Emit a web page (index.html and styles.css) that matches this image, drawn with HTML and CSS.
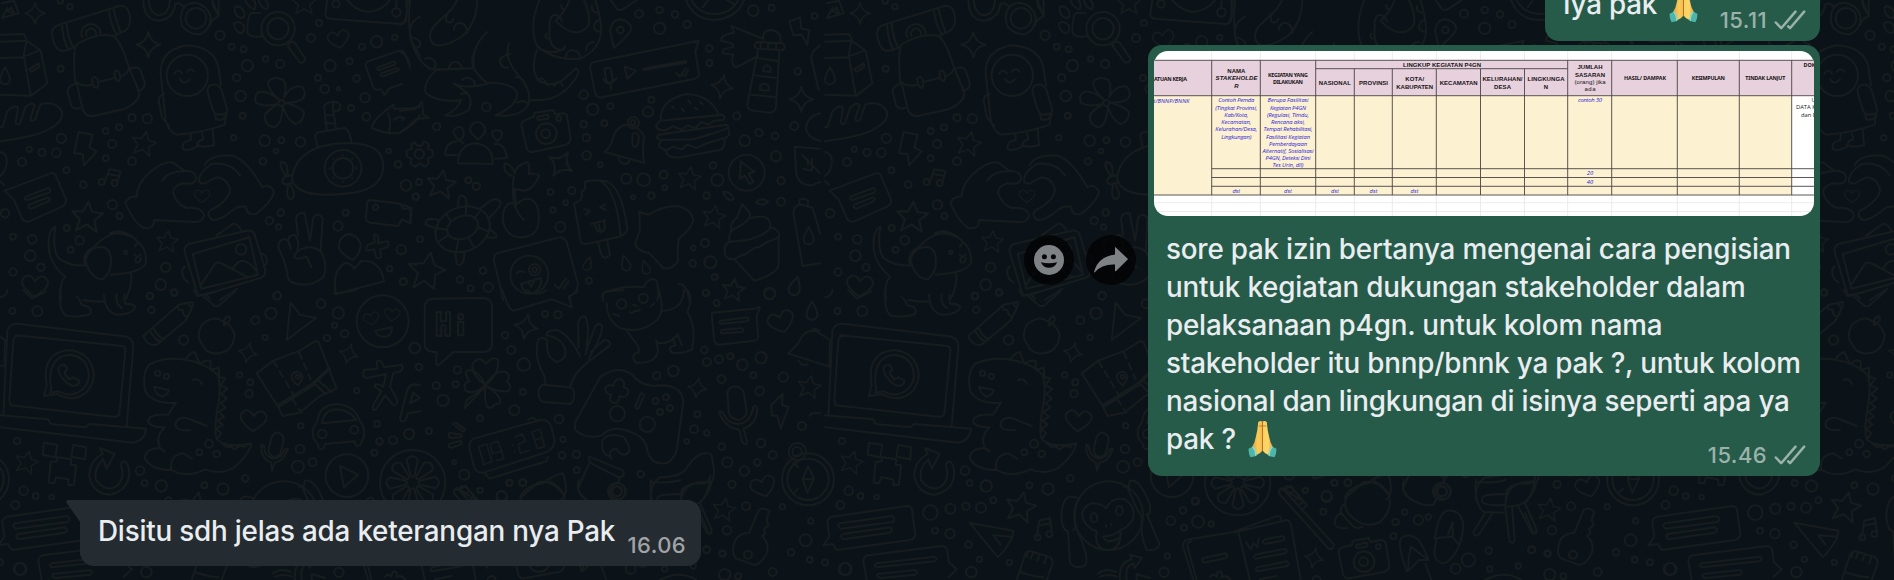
FILE: index.html
```html
<!DOCTYPE html>
<html lang="id">
<head>
<meta charset="utf-8">
<title>Chat</title>
<link rel="stylesheet" href="styles.css">
</head>
<body>
<svg class="wallpaper" width="1894" height="580" viewBox="0 0 1894 580" aria-hidden="true">
  <defs>
    <path id="star" d="M0-42L13-14 43-12 20 9 29 40 0 22-29 40-20 9-43-12-13-14Z"/>
    <path id="spark" d="M0-38Q6-6 36 0 6 6 0 38-6 6-36 0-6-6 0-38Z"/>
    <path id="heart" d="M0 32Q-46 2-38-18-20-44 0-14 20-44 38-18 46 2 0 32Z"/>
    <path id="drop" d="M0-24Q-15 2-15 12A15 15 0 0 0 15 12Q15 2 0-24Z"/>
    <g id="tile">
      <g transform="scale(.33333)">
        <path d="M5 10L42 2 56 40 6 54 22 24M22 34l12-12 8 18Z"/>
        <path d="M178 74L358 18Q384 14 390 50 392 84 372 94L345 106M224 142L190 153Q164 154 156 104 154 80 178 74M186 76Q190 126 206 150M200 70Q204 118 220 142M326 28Q332 76 350 102M340 24Q350 68 362 98M246 112A29 29 0 1 1 302 102M260 108A15 15 0 1 1 288 102"/>
        <path d="M226 252Q218 160 228 135 290 96 340 108 362 120 388 206L418 276Q420 306 370 328L280 348Q250 352 244 310L230 250M230 246Q246 262 274 254M296 246L342 234M360 230Q382 222 386 206M276 236q8-10 16 0 6 20-2 28-12-2-14-28M344 216q8-8 14 2 6 18-2 26-14-4-12-28M232 250Q200 258 203 276L214 318Q224 330 240 324M390 206Q416 196 422 212L434 246Q436 270 414 272"/>
        <path d="M0 104L72 102 80 120 70 172 0 174M0 125L80 122 122 152 142 250 94 287 0 284M72 172L92 285M70 170L118 152M88 208L116 190 118 200 94 216Z"/>
        <use href="#drop" x="15" y="226"/>
        <path d="M0 424Q110 410 150 386 192 362 186 336 170 302 124 312 118 318 106 358 90 370 92 352L104 316Q98 302 76 322L60 370Q42 380 50 350L54 322Q42 314 22 334L8 380 0 382"/>
        <use href="#spark" transform="translate(105 40) scale(.85)"/><use href="#spark" x="445" y="134"/>
        <path d="M430 0Q430 60 478 62 520 56 526 12 540 4 552 22M446 0Q450 44 478 46 508 42 510 0M636 0L656 48Q632 60 630 76M656 0V48M640 0Q630 12 656 44M552 22Q534 50 548 80 570 106 602 102 632 88 632 50 620 12 582 8 560 10 552 22"/><circle cx="588" cy="55" r="31"/>
        <path d="M497 360Q506 396 530 404 610 398 674 374 676 354 680 340M497 360L482 220Q480 150 560 136 640 140 655 200L663 256M494 282Q476 284 476 304L486 352 508 378M622 272Q624 252 648 254 664 260 668 282L682 330Q680 348 646 342 636 330 622 272M646 344L648 358Q672 364 678 344M572 404V420Q544 424 548 446 560 456 592 440 590 424 610 418L606 400M592 432Q600 446 642 436L638 388M522 222q12-18 24-2M560 216q12-16 24 0M540 236q12 22 30 2"/><circle cx="562" cy="226" r="62"/>
        <circle cx="834" cy="86" r="50"/><circle cx="834" cy="86" r="32"/><path d="M782 40L756 38Q742 44 742 96 748 116 788 108M862 136Q870 120 884 128L916 176Q914 192 898 186Z"/>
        <path d="M736 0Q744 24 764 28 770 10 760 0M776 0Q780 22 800 28 810 14 796 0M704 22q12-8 24 6 12 22-2 26-24-4-22-32M702 70q14-10 30 6 4 20-10 24-20-6-20-30"/>
        <path d="M982 0L976 42Q978 56 990 56L1202 72Q1218 72 1220 50L1224 0M1042 0Q1070 34 1106 36 1150 30 1170 0M1190 0L1188 26"/><circle cx="1008" cy="12" r="11"/><circle cx="1189" cy="37" r="13"/>
        <use href="#star" transform="translate(912 8) scale(.82)"/><use href="#heart" transform="translate(1016 118) rotate(-12) scale(.82)"/>
        <path d="M1226 190L1212 156Q1206 150 1192 154L1104 184Q1094 188 1098 200L1120 262Q1126 272 1144 268L1152 286 1170 264 1206 252M1134 202l48-18q10 4 2 10l-46 16q-10-2-4-8M1144 220l46-16q10 2 4 8l-46 18q-10-4-4-10"/>
        <path d="M852 292Q862 256 850 240 824 226 804 246 804 270 836 298 802 270 776 276 760 290 768 308 790 322 834 312 812 324 796 342 790 374 820 382 846 376 848 320 862 360 886 372 912 366 912 336 900 320 856 308 880 310 904 300 924 284 906 260 874 252 852 292"/><circle cx="844" cy="309" r="9"/>
        <path d="M876 530Q896 434 1030 430 1150 424 1150 500 1146 566 1060 578 880 602 876 530M954 444L946 410Q944 398 960 396L1034 384Q1050 390 1054 428M980 390L972 320Q980 302 1012 306 1028 318 1016 332H1000L1008 386M974 346H1002M976 370H1006M1000 308L998 330M874 526Q842 530 848 548 856 560 880 544M858 528Q832 492 846 486 866 488 862 526M864 556Q856 594 872 598 892 588 872 556"/><circle cx="1029" cy="505" r="55"/><circle cx="1029" cy="505" r="31"/><circle class="dots" cx="1029" cy="505" r="40"/>
        <path d="M1260 50Q1220 70 1232 120L1260 168M1260 320L1240 324 1182 326 1180 314Q1116 360 1116 384 1156 404 1200 398 1250 370 1260 344M1164 340Q1176 364 1166 400M1182 360q14-16 32-4"/>
        <path d="M1108 600L1192 610Q1206 612 1208 626L1232 626 1230 668 1206 658 1194 678 1110 668Q1096 664 1098 650L1102 606Z"/><circle cx="1127" cy="622" r="8"/>
        <path d="M236 396L278 404 268 442 290 454 252 496 248 462 222 460Z"/><use href="#star" transform="translate(432 430) rotate(12) scale(.85)"/><use href="#star" transform="translate(262 650) rotate(4) scale(1.08)"/><use href="#star" transform="translate(502 724) rotate(5) scale(.76)"/>
        <path d="M314 546L328 508 362 514 352 548M324 522L358 528"/><circle cx="305" cy="546" r="9"/><circle cx="344" cy="549" r="9"/>
        <path d="M14 572L152 520Q164 516 168 528L198 598Q200 612 186 620L88 664Q74 668 66 656L42 600ZM78 590l66-26q10 4 4 14l-66 22q-12-2-4-10M88 614l56-22q10 4 2 12l-52 22q-12-2-6-12M0 456Q24 460 20 492 14 520 0 528M0 544l12 10"/>
        <path d="M410 590Q410 554 444 522 490 480 520 488L552 512Q590 512 588 538 582 556 546 550 516 560 520 580 530 612 560 624 606 620 612 646 608 668 580 666L462 660Q462 690 430 684 404 670 376 610 384 588 410 590M486 542Q504 514 552 514M598 546Q590 524 634 492 690 484 720 526M614 496Q626 466 690 466 724 470 762 522L788 562Q806 548 822 574 820 600 768 642 740 648 738 620 710 616 694 634 660 662 636 660 618 644 630 632 690 600 690 566 680 534 650 532 628 540 616 550 604 552 598 546"/><use href="#heart" transform="translate(606 588) scale(.6)"/>
        <path d="M184 900Q176 850 196 830 140 786 146 720 148 690 166 680 156 750 176 774 210 800 256 796M392 820Q400 846 378 896M256 796Q244 760 280 742 314 706 350 700 400 704 414 726 440 746 438 790 420 820 332 824M256 780Q270 836 308 838 338 816 332 770 326 736 294 742 270 744 258 776M330 700Q364 682 404 716M414 728l-10 12M404 764q8 12 18 0M414 770q-14 8-4 18 12 0 12-14"/><circle cx="377" cy="757" r="5"/>
        <use href="#heart" transform="translate(104 858) rotate(5)"/>
        <path d="M566 732L740 692Q758 688 764 704L796 810Q798 828 780 834L608 886Q594 890 590 874L554 756Q552 738 566 732M578 762L748 712 774 824 604 866ZM602 856L646 790Q656 784 668 792L740 830M700 804Q722 766 754 796L768 812M650 706L698 672Q712 668 724 692M554 800Q540 810 552 836L566 848M786 760Q804 768 800 790L790 800M630 896L620 886M660 900L712 866"/><circle cx="723" cy="748" r="16"/>
        <path d="M862 816Q850 770 836 746 832 716 858 718 870 724 872 748M870 740Q856 706 884 704 900 724 892 750M894 706L888 656Q892 636 914 640L930 722 940 652Q954 636 968 654L962 754M892 754Q930 730 962 754 986 790 970 832 926 868 874 846 860 836 862 816M892 754Q872 776 896 776L920 770 934 802"/>
        <path d="M1058 780Q1018 760 1016 736 1020 704 1050 702 1082 712 1082 740 1078 766 1058 780M1036 788Q1058 792 1062 806 1074 796 1082 784 1140 776 1152 844L1008 882Q994 814 1036 788M1122 704q12-4 14 12l-2 14 28-6q10 10-2 18l-20 6 4 22q-8 10-16 0l-6-22-20 4q-8-10 4-18l18-6ZM1228 794Q1226 786 1250 796"/>
      </g>
      <g transform="translate(400 0) scale(.33333)">
        <path d="M30 0Q14 160 90 206 140 210 222 204M232 0Q230 70 188 108 130 146 100 132 80 110 100 80L156 26 172 0M222 204Q212 140 262 96M262 250Q200 200 222 160M108 210Q66 250 78 280 120 310 184 300 172 330 136 346 170 354 206 330 224 290 188 268L160 250Q200 270 274 248 340 250 352 280 352 318 286 346 360 354 384 316 400 270 350 220 310 170 328 128M108 210Q170 206 222 204M330 162q-34 8-30 28 14 18 24 12M38 112q28 10 22 26-8 8-18 4M74 176q20-8 32 12 2 14-4 18M146 206q4-20 18-20 20 0 22 20M150 30q-18 24-10 36 18 6 20-10M162 90q0-20 18-22 22 4 22 32M186 240q20-16 38 6 2 14-8 14M184 282q22-8 26 14M348 232q18-6 30 28M352 308q16-10 28 0M18 0Q26 70 0 74M0 154Q30 170 30 204"/>
        <path d="M418 0Q386 80 410 136 460 184 540 176 600 150 604 90 600 40 586 0M410 150Q390 210 416 242 460 268 500 230L526 206Q542 206 530 230 480 310 392 300M450 76Q440 140 480 150 496 150 494 138 490 158 450 156 420 150 412 140M466 64Q500 30 508 0M552 0Q582 70 556 86 520 116 468 64M448 74q2-30 18-30 16 4 20 20M496 176q2-24 20-26 22 2 26 24M558 152q0-26 24-26M602 96q-22-4-20-18 4-18 16-16M590 38q-18-6-14-20M414 240q16-14 28 16M462 258q16-24 26-2M494 30q-12-4-10-16M440 100q-10 8 2 16"/>
        <path d="M632 0L650 26Q660 34 672 26L710 0M642 144L630 92Q636 58 660 58 692 64 694 86 692 100 642 144"/><circle cx="661" cy="90" r="10"/>
        <path d="M582 186L896 122 886 156 896 214Q900 230 886 236L606 292Q592 294 586 282L570 202Q570 190 582 186M614 206q14-8 20 6l4 28q-6 14-16 6-8-14-8-40M610 238q14 26 40-4M630 250l4 18M674 200L708 212 682 236ZM730 206l128-24q2 4 0 6l-126 22ZM828 218l12 12 18-26M846 224l10 4 8-20"/>
        <path d="M858 0Q880 60 946 60 1010 54 1032 0M874 0Q898 44 950 42 1000 36 1014 0M924 0L908 22M980 0L1004 14"/>
        <path d="M1084 114L994 78 1002 98Q960 104 964 122L980 126Q1006 132 998 142 960 146 970 160L1000 164 996 182Q998 204 1014 200L1074 168M1090 120Q1084 92 1112 90 1144 92 1142 126M1072 126L1148 130Q1160 142 1148 150L1070 146Q1056 136 1072 126M1082 126V146M1104 128V148M1128 130V150M1074 150L1042 312Q1040 330 1060 332L1110 338Q1128 336 1128 318L1138 152M1074 174L1136 184M1064 226L1132 234M1054 284L1128 292M1090 214V202Q1104 188 1112 204V216ZM1080 270V258Q1094 244 1106 258V272Z"/>
        <path d="M1168 64L1200 52 1204 86 1228 90 1222 134 1204 104 1180 106Z"/><use href="#spark" transform="translate(966 260) rotate(10) scale(.95)"/><use href="#spark" transform="translate(1204 298)"/><use href="#spark" transform="translate(482 492) rotate(32) scale(1.1)"/>
        <path d="M1260 136Q1230 160 1234 176L1256 270M1260 340Q1220 350 1218 386 1222 414 1260 422M1260 446L1184 440 1188 510Q1190 558 1236 556L1260 546M1206 464L1260 520M1222 476l2 20M1236 476v36l-26-6"/>
        <path d="M782 362Q778 300 860 282 930 284 958 346ZM782 362L966 344Q980 350 970 360L940 362 926 374 904 366 886 384 862 376 844 390 820 378 794 392Q768 390 768 376L782 362M776 404L980 374Q990 380 980 386L940 400 880 418 782 420Q764 414 776 404M984 386Q994 404 980 412L920 430 890 444 862 434 846 448 818 440 798 452 776 440 782 420M796 450Q800 476 840 472L960 450Q976 442 974 418M816 318l6 8M846 326l6 8M866 302l6 8M884 324l8 4M900 308l8 4"/>
        <path d="M614 456Q634 440 640 410 656 370 690 374 724 384 732 412 726 450 732 488ZM656 474q4 18 20 18 10-2 12-10M698 402q12-8 18 6 2 30-12 34-10-6-6-40"/><circle cx="700" cy="368" r="17"/><circle cx="699" cy="367" r="7"/>
        <path d="M372 362L402 350 404 338 460 330 466 344 488 340Q500 340 502 352L512 414Q510 430 498 434L398 456Q384 458 380 444L364 376Q364 366 372 362M414 350l28-6q8 6 2 12l-28 4q-8-4-2-10"/><circle cx="439" cy="401" r="31"/><circle cx="437" cy="401" r="13"/><circle cx="476" cy="356" r="7"/>
        <path d="M234 418Q210 400 210 386 216 366 234 366 256 372 256 390 252 408 234 418M174 490Q176 434 226 430 280 436 278 492ZM176 420Q158 400 160 392 170 378 184 382 196 396 188 412L180 422 190 430M170 466L136 464Q136 428 170 424M292 424Q272 406 278 394 294 384 306 398 306 412 292 424M284 432Q314 428 322 474L286 476"/>
        <circle cx="58" cy="462" r="14"/><path d="M44 426l6 10 14 2 8-14 14 8-2 14 14 6v16l-14 8 2 14-12 10-14-10-14 10-14-8 2-16-14-6v-18l16-6-2-14Z"/>
        <path d="M0 332L46 326 66 306 70 344 86 354 50 356Q20 384 0 398M0 350q14 4 8 10"/>
        <path d="M340 600Q336 550 342 530 306 520 314 490 336 494 344 520 346 496 384 486 390 506 386 522 404 518 418 526 400 570 370 572L344 566 348 614Q390 576 412 620 430 700 378 710 320 720 308 660 310 606 342 608 350 640 372 660"/>
        <use href="#star" transform="translate(124 552) rotate(8)"/><path d="M92 758L104 796 136 810 106 824 102 866 72 842 40 862 54 820 26 792 70 790Z"/>
        <ellipse cx="188" cy="688" rx="84" ry="66" transform="rotate(-22 188 688)"/><ellipse cx="188" cy="682" rx="48" ry="34" transform="rotate(-22 188 682)"/>
        <path d="M174 620L176 592Q188 580 198 596L200 618M240 626L272 602Q290 590 302 606 304 620 264 656M104 684L76 674Q76 656 94 656L120 660M166 758L170 790Q180 802 190 784L194 754M258 712L286 714Q298 704 270 690M198 620V648M238 636L222 656M138 640L152 664M108 684L142 690M116 724L144 706M168 758L176 716M222 742L206 714M264 694L236 682"/>
        <path d="M522 610L542 722Q544 734 560 732L658 710Q682 702 682 684 664 560 620 544 580 536 554 546 560 570 544 576 554 600 522 610M600 542Q650 570 662 706M552 626l18 8-14 10M616 614l-16 8 18 8M574 672l42-12M584 670q4 26 20 26 16-8 8-32M596 674l4 16M594 728L604 764Q614 782 630 764L622 724"/>
        <path d="M718 636L746 644Q786 618 830 618 874 626 880 660 872 690 836 716 832 740 834 784 814 810 790 804L748 760Q706 750 706 730 716 700 720 690ZM290 760L480 712Q494 712 500 726L534 852Q532 880 510 888L512 900M310 900L282 784Q280 766 290 760M362 852l60-18q8 20-20 46-32 2-40-28M386 848l8 12 8-16M350 820q8-10 22-4M464 854l12 12 22-30M490 866l16-22"/><circle cx="388" cy="824" r="57"/><circle cx="404" cy="809" r="17"/><circle cx="404" cy="809" r="7"/>
        <use href="#star" transform="translate(868 534) rotate(8) scale(.8)"/><use href="#star" transform="translate(942 650) rotate(10) scale(.8)"/><use href="#star" transform="translate(1000 868) rotate(8) scale(.8)"/>
        <circle cx="1040" cy="518" r="54"/><path d="M1022 484L1064 516 1046 520 1060 546 1048 552 1034 526 1020 536Z"/>
        <path d="M1062 842L1004 778Q972 780 974 750 976 730 988 726 986 700 996 692 986 670 1012 652L1026 612 1050 640Q1054 664 992 692M1052 654Q1100 640 1110 668 1120 700 1040 720L988 726M1110 682Q1144 690 1136 712L1098 728 1080 740 1062 744 1040 760 1004 776M1136 712V794Q1134 820 1064 842M970 576q20-4 32 22-22 8-32-22M1068 608q18-20 36-2-14 14-36 2"/>
        <path d="M1180 640Q1180 614 1206 614L1238 624 1260 700M1180 640L1208 798 1260 790M1198 616V600Q1212 592 1224 602V618"/><use href="#drop" x="1226" y="706"/>
        <use href="#drop" transform="translate(564 790) rotate(16) scale(.8)"/><use href="#drop" transform="translate(676 788) rotate(-14) scale(.9)"/><use href="#drop" transform="translate(736 800) rotate(-18) scale(.8)"/><use href="#drop" transform="translate(1186 856) rotate(16) scale(1.1)"/>
        <path d="M610 900Q600 874 630 872 680 856 730 862 746 830 768 840 780 870 772 900M836 852Q860 850 868 900M0 612L34 624 32 670 10 660"/>
      </g>
      <g transform="translate(0 290) scale(.33333)">
        <path d="M10 376L22 124Q28 98 60 102L366 138Q400 140 400 170L380 408M46 136L368 168Q378 172 376 184L358 372Q354 382 340 380L32 346 28 330 40 150Q42 138 56 138M0 376L144 388 152 402 256 412 268 402 438 416Q436 450 400 458L0 412"/>
        <path d="M132 318L140 284Q128 220 166 192 220 164 264 206 300 260 260 306 220 340 172 312ZM154 296Q140 230 180 202 220 182 254 216 282 262 248 298 214 326 176 304L150 308ZM182 226Q170 232 180 254 200 284 220 288 240 286 238 272L220 262 208 268Q196 258 194 246L202 238 194 224Z"/>
        <path d="M528 338Q460 344 436 304 424 250 450 222 500 198 560 210 620 220 652 254 666 290 652 360 640 430 652 450 690 476 754 460 750 490 700 534 660 556 616 538 560 566 516 540 450 540 434 504 436 476 480 474 464 440 494 412 450 412 444 394 446 372 504 374ZM480 474L494 484M514 540Q506 496 550 490L576 506M620 408L560 384Q530 380 526 404 530 424 570 420M462 290L506 300Q504 316 484 320 466 312 462 290M580 270q16-8 26 12M556 208Q570 188 584 186L598 220M600 222Q616 206 632 214V240M634 240L656 232 658 260M658 262L676 264 662 286 682 296 664 312 680 326 662 340 676 352 656 366 672 380 652 392 668 404 648 416 664 430 652 446M664 458l14 12 14 0 12 8 14-10 20 2"/><circle cx="473" cy="250" r="8"/><circle cx="499" cy="259" r="8"/>
        <path d="M430 138L536 44 578 36Q582 48 556 92L470 164Q442 170 430 138M534 46q-4 16 14 14 0 16 12 20M450 122Q464 148 480 154M460 114Q470 136 488 146M562 40l12 12M606 104Q640 74 664 92 690 96 704 134 700 180 664 188 620 198 608 164 586 140 606 104M672 106Q668 84 686 78 698 92 672 106"/>
        <path d="M180 0Q176 66 200 78 250 82 270 72 280 50 246 46 240 28 230 20M250 30Q280 36 312 34M312 14Q314 66 352 74 400 72 406 50 396 38 376 42 372 30 374 14M350 12Q346 44 366 54M0 22q22-4 22-22M70 0L96 26 138 4M582 0L592 18 650 4M612 20L644 48 656 48 706 4M1004 0v12L1068 0"/>
        <path d="M872 38L900 74 948 84 860 150ZM770 250L820 212 900 182 944 154 956 156 1010 296 960 318 898 368 848 378 832 346ZM832 346L938 280 984 236M838 350L944 284M944 280L990 236M940 276L976 312M956 272L994 306"/><path class="dashed" d="M820 212L884 320M896 186L932 268M876 326L904 368"/><path d="M894 286Q872 270 876 256 882 242 898 246 912 256 904 272Z"/><circle cx="893" cy="260" r="6"/>
        <use href="#spark" transform="translate(744 188) rotate(12) scale(.8)"/><use href="#spark" transform="translate(1046 192) rotate(16) scale(.8)"/><use href="#heart" transform="translate(760 392) rotate(4)"/>
        <circle cx="1148" cy="94" r="78"/><use href="#heart" transform="translate(1114 86) rotate(-12) scale(.6)"/><use href="#heart" transform="translate(1176 74) rotate(6) scale(.6)"/><path d="M1126 122Q1150 118 1176 112 1176 138 1156 140 1130 140 1126 122"/>
        <path d="M1092 240L1132 236 1130 214Q1146 206 1152 232L1206 224Q1212 240 1196 246L1180 248 1170 290 1192 330Q1192 348 1178 344L1156 316 1128 358Q1114 366 1120 344L1144 304 1124 290Q1126 276 1150 290L1158 252 1100 264Q1084 262 1092 240M1200 384L1222 300Q1232 276 1260 286M1200 384Q1200 398 1216 392L1224 370 1260 364M1230 340L1240 308 1260 324Z"/>
        <path d="M952 394Q956 346 1010 342 1064 346 1078 390 1096 410 1092 440L1080 466Q1066 472 1064 454L976 462 970 476Q954 482 954 462 936 450 938 418ZM966 400Q970 362 1006 358 1054 362 1068 390Z"/><circle cx="967" cy="432" r="13"/><circle cx="1063" cy="419" r="12"/>
        <path d="M806 478L814 444Q822 426 836 428 854 436 850 456L842 488Q836 502 820 500 806 496 806 478M784 464Q780 500 806 514L812 516 816 542 824 518Q850 516 864 476L854 478Q844 506 820 506 792 500 792 468Z"/>
        <circle cx="1041" cy="557" r="64"/><path d="M1020 528L1074 554 1032 592Z"/>
        <path d="M132 458L172 464 166 502 128 494ZM220 464L258 472 256 508 214 500ZM172 502L214 508 212 524 228 526 222 584 206 586 204 568 168 562 162 580 146 578 152 516 170 514Z"/>
        <path d="M310 508L320 536 344 492 300 474 308 492Q266 516 268 560 280 612 332 614 386 600 388 550 386 520 374 514 360 516 364 530 376 570 344 592 312 604 288 570 280 536 310 508"/><use href="#star" transform="translate(80 516) rotate(14) scale(.8)"/>
      </g>
      <g transform="translate(400 290) scale(.33333)">
        <path d="M98 26L250 24Q274 26 276 48V164Q274 184 252 186H160L116 226 108 222 110 186H100Q76 184 74 164V50Q76 28 98 26M112 66h10v28h16v-28h12v72h-14v-32h-12v32h-14V66M174 96h16v40h-16Z"/><circle cx="182" cy="80" r="8"/>
        <path d="M306 0L328 54 340 62 456 28 516 52 506 20 532 4M380 0Q410 22 440 0"/><use href="#spark" transform="translate(378 110) rotate(10)"/>
        <path d="M256 286Q210 250 218 222 236 194 258 222 276 196 294 210 300 250 256 286 286 236 316 246 336 256 320 274 340 290 324 304 290 306 256 286 310 320 298 340 280 344 276 352 250 364 256 286 220 316 198 302 186 280 208 274 186 240 210 240 240 246 256 286M250 296L194 354 200 330Z"/>
        <path d="M436 282L434 260Q400 200 414 150 432 134 442 154 436 200 470 216 510 204 490 166 480 144 440 136 436 122 470 120 506 130 540 198M536 172L534 100Q540 76 556 80 572 110 556 194M560 180L586 108Q604 94 606 112 606 140 566 206M572 186L612 150Q632 150 630 166L566 214Q520 250 510 290M430 284L512 292Q526 298 522 320 520 340 508 342L430 336Q414 330 416 306 418 286 430 284"/>
        <path d="M610 34Q600 4 628 4L670 0M620 38Q620 90 660 114 720 134 772 90 796 60 776 0M682 124L714 168 718 186Q696 190 700 208L708 218Q770 222 774 180L768 150M788 62Q850 60 852 0M862 0Q880 20 862 66 890 110 876 178 850 192 816 188 800 170 826 166L818 146M772 160Q820 160 832 132L846 166M688 66q8 8 16-4 14 4 16-4M698 44l12 4M640 72l18 6M752 50l10-10"/><circle cx="665" cy="42" r="14"/><circle cx="730" cy="25" r="14"/>
        <path d="M524 400L600 262Q650 224 694 252 730 296 780 286 846 286 850 336L830 480Q816 526 780 520 746 516 740 470 726 436 700 430 640 400 606 436 560 450 526 420ZM616 294q8-14 24-6 4-24 22-20 16 6 8 24 20 4 14 20-10 14-26 6 0 26-20 20-14-8-4-24-20-2-18-20M722 310q8-2 10 6l-16 38q-8 4-10-4Z"/><circle cx="652" cy="371" r="23"/><circle cx="742" cy="403" r="23"/><circle cx="767" cy="333" r="9"/><circle cx="798" cy="322" r="9"/><circle cx="810" cy="354" r="9"/><circle cx="780" cy="366" r="9"/>
        <path d="M220 446L420 390Q446 388 452 406L464 450Q464 474 440 486L250 548Q228 550 222 530L208 474Q208 454 220 446M256 550L268 566 440 514 444 500M384 390Q400 376 408 390"/>
        <path class="digits" d="M236 470l24-8 16 52-24 10ZM278 492l-8-30 24-8 18 52-22 6M284 490l22-8M338 464v2M344 484v2M346 440l22-8 8 22-22 10 8 26 24-8M396 426l24-8 14 52-22 6ZM404 450l22-6"/>
        <path d="M158 402q10-10 16 2l20 12q2 8-6 8ZM146 434q2-8 12-4l26 4q4 8-4 8l-30 2ZM146 470q-2-8 8-10l28-8q6 6 0 12l-30 10ZM162 602q8-12 14-6l50 34M178 600l4-12 18 4 30 38"/>
        <circle cx="38" cy="578" r="98"/><path id="segment" d="M32 556L20 510Q38 488 54 510L44 556Q38 566 32 556"/><use href="#segment" transform="rotate(45 38 578)"/><use href="#segment" transform="rotate(90 38 578)"/><use href="#segment" transform="rotate(135 38 578)"/><use href="#segment" transform="rotate(180 38 578)"/><use href="#segment" transform="rotate(225 38 578)"/><use href="#segment" transform="rotate(270 38 578)"/><use href="#segment" transform="rotate(315 38 578)"/>
        <path d="M568 500L670 542Q676 562 656 562L574 520Q562 506 568 500M568 520L534 594Q536 614 558 628M630 500Q600 490 608 450 626 426 670 440 700 480 680 492 660 500 650 476 620 480 634 506M660 562L656 576"/><circle cx="654" cy="604" r="24"/><circle cx="651" cy="604" r="14"/>
        <path d="M752 630Q750 580 780 562 850 560 862 530 900 476 934 494 950 560 934 576 870 572 846 600L842 626M934 576Q930 610 900 636M900 670L926 730Q940 736 930 706L904 650"/>
        <path d="M360 624Q370 590 430 580 450 560 488 550 498 570 498 600 496 620 484 628M450 574Q480 590 492 614"/>
        <path d="M936 68L1064 56 1080 50 1070 76 1074 140Q1074 150 1062 152L956 164Q944 162 942 148L936 80ZM962 92l80-10q8 6 0 12l-80 8q-6-4 0-10M966 120l60-6q8 6 0 12l-60 4q-8-4 0-10"/><use href="#heart" transform="translate(1144 96) rotate(-18)"/><use href="#drop" transform="translate(1236 60) scale(1.1)"/><use href="#star" transform="translate(1000 0) rotate(8) scale(.76)"/>
        <path d="M1164 190Q1190 170 1200 150 1216 116 1250 124L1290 150 1288 230ZM1196 212q10 20 26 10M1234 122q8-10 24 0"/><use href="#star" transform="translate(1228 290) rotate(10) scale(.8)"/><use href="#spark" transform="translate(892 294) rotate(8) scale(.8)"/>
        <path d="M982 306Q990 288 1010 290 1030 296 1032 312L1040 366Q1038 386 1014 390 990 386 986 366ZM958 368Q956 360 968 368 984 404 1016 402 1052 398 1060 350 1070 342 1072 356 1070 404 1030 416L1042 458Q1036 470 1026 454L1018 420Q974 412 958 368M1148 312L1114 344 1116 376 1132 378 1142 416 1166 350 1146 346ZM1228 378Q1232 366 1260 370"/>
        <use href="#heart" transform="translate(1090 590) rotate(-18) scale(.95)"/><circle cx="1224" cy="568" r="78"/><circle cx="1224" cy="568" r="62"/><circle cx="1192" cy="485" r="26"/><circle cx="1191" cy="485" r="14"/><path d="M1224 528L1242 566 1222 608 1208 568ZM1208 568H1242M1180 518l14 14M1184 606l10-10"/>
        <use href="#star" transform="translate(972 658) rotate(10) scale(.8)"/><path d="M1048 728L1076 660Q1090 650 1108 664L1100 690 1106 706 1092 716 1096 730 1086 738Q1110 760 1100 790 1082 826 1060 824L1010 806Q996 796 1000 770 1006 730 1048 728"/><circle cx="1044" cy="794" r="12"/>
        <path d="M780 870Q840 838 890 870"/>
      </g>
      <g transform="translate(-25 290) scale(.33333)">
        <path d="M96 680L322 648Q334 648 336 660L346 734Q344 746 330 750L110 780 98 762 70 766 88 740 82 696Q84 684 96 680M120 700l156-22q14 8 2 18l-156 20q-14-8-2-16M128 732l142-20q12 8 0 16l-140 20q-12-8-2-16M204 796L426 768Q440 768 442 782L446 816 470 838 446 860M204 796Q190 800 190 814L200 870M230 820l174-20q12 6 0 14l-174 18q-12-6 0-12M234 852l112-12q10 8 0 14l-104 10q-14-4-8-12"/>
        <path d="M508 698L640 722 636 744Q606 796 592 800ZM634 740L580 736 602 764M710 740L718 692 750 684 756 730M720 706L750 700"/><circle cx="712" cy="742" r="9"/><circle cx="748" cy="732" r="9"/><use href="#star" transform="translate(662 650) rotate(12) scale(1.05)"/>
        <path d="M650 870L676 792Q680 782 692 784L746 800Q760 806 758 820L740 870M660 846Q700 860 730 862M700 786l-8 20M720 792l-8 20M740 800l-8 20M684 786l-4 14"/>
        <circle cx="926" cy="677" r="103"/><path d="M890 724Q850 710 846 670 860 632 894 642 910 644 918 656 936 620 974 628 1010 650 998 690 980 716 960 720 968 770 930 780 890 784 888 740ZM908 740Q940 738 958 724 968 730 958 744 920 764 908 740M918 706v4M934 702v4M838 626L820 620Q786 614 784 680 786 720 804 724L810 818Q826 840 856 826 870 800 826 712L820 720M838 626Q820 650 826 712M984 596L990 572Q1020 566 1048 640 1056 674 1040 672L1078 760Q1074 784 1040 780 1020 740 1026 680 1010 660 984 596M972 590L986 590"/><ellipse cx="882" cy="683" rx="10" ry="14"/><ellipse cx="958" cy="662" rx="10" ry="14"/>
        <path d="M894 850q24-18 54-4M900 860q30-10 50 0M960 870Q954 820 994 808L990 794 1026 804 1004 834 1000 820Q974 826 980 870M1010 870V852L1050 864"/>
      </g>
      <g transform="translate(355 460) scale(.33333)">
        <path d="M8 256Q12 240 28 238L176 214 320 180Q332 184 334 200L362 360M8 256L40 360M22 258L50 360M22 258Q20 246 34 244M164 214L290 168Q304 168 302 178M176 220L210 360M198 246l14 22 8-18 12 12 4-26M70 294l68-14q8 8 0 14l-66 14q-10-6-2-14M254 238l54-10q10 8 0 14l-54 10q-10-8 0-14M226 284l90-18q8 8 0 14l-90 16q-10-4 0-12M232 322l90-18q8 8 0 14l-90 16q-10-4 0-12M240 358l50-10M90 350q10-12 20 0 0-20 14-14 4 10 0 16 14-10 28 8"/>
        <path d="M298 90Q306 84 316 94L462 254Q460 270 446 266L300 104Q294 96 298 90M310 90L332 78 382 136 364 150M328 104l10-8M344 120l10-8M358 134l12-8"/><use href="#spark" transform="translate(402 294) rotate(12) scale(.8)"/>
        <path d="M500 110L548 68Q590 56 626 104 640 150 600 186 560 206 524 178 484 150 500 110M492 134Q480 140 482 158L520 200Q534 208 548 200M484 158Q464 166 464 192 470 208 500 204"/>
        <path d="M488 262L514 256 520 242 566 234 572 246 602 240Q616 240 618 256L628 318Q626 334 610 336M488 262Q474 266 476 280L490 346 500 356 610 336M530 254l28-6q8 6 2 12l-28 4q-8-4-2-10"/><circle cx="552" cy="305" r="31"/><circle cx="551" cy="305" r="13"/><circle cx="595" cy="260" r="7"/>
        <path d="M680 334Q650 250 664 234 690 216 716 240 730 260 746 300L716 300 684 334 686 298 692 260 746 300M754 360L736 310M764 236Q776 160 800 152 840 146 850 190 850 220 838 256L818 230 770 234M818 230V186L804 224M838 256Q812 310 786 310 760 300 764 270L770 234"/>
        <path d="M672 60Q660 90 690 116 730 142 760 134L770 116M888 60Q880 130 912 156L970 158M976 60Q950 70 890 66M908 128Q900 106 930 104L976 102M908 128Q930 140 972 134M976 140Q980 70 1030 70 1060 76 1066 48 1060 100 1040 124 1010 142 976 140M916 158L880 216Q884 234 898 222L938 158M976 144L988 242Q998 256 1004 240L996 142M1014 138L1056 218Q1070 228 1070 210L1036 132"/>
      </g>
      <g id="bubbles"></g>
    </g>
  </defs>
  <g class="doodles"><use href="#tile" x="-825"/><use href="#tile"/><use href="#tile" x="825"/><use href="#tile" x="1650"/></g>
</svg>

<svg class="sprites" aria-hidden="true">
  <defs>
    <linearGradient id="skin" x1="0" x2="1"><stop offset="0" stop-color="#e39a3a"/><stop offset=".3" stop-color="#f8cd5c"/><stop offset=".46" stop-color="#f3bd50"/><stop offset=".5" stop-color="#c9802c"/><stop offset=".54" stop-color="#f9d264"/><stop offset=".75" stop-color="#fbd768"/><stop offset="1" stop-color="#e39a3a"/></linearGradient>
  </defs>
  <symbol id="pray" viewBox="0 0 30 38">
    <path fill="url(#skin)" d="M10.600 1.400Q12.800-.2 15 1 17.200-.2 19.400 1.400L20.400 10Q22 18 23.400 22.500L26.500 28.500 21 35.500Q17.500 34.500 15 31 12.500 34.500 9 35.500L3.500 28.500 6.600 22.500Q8 18 9.600 10Z"/>
    <path fill="none" stroke="#b96a20" stroke-width=".8" d="M15 1.500V31M11 5.500h8"/>
    <path fill="#4fb5a8" d="M.6 29L5.200 26.800Q8.800 30.500 8.600 36.600L2.600 38Q.3 34 .6 29ZM29.400 29L24.800 26.800Q21.200 30.500 21.400 36.600L27.400 38Q29.700 34 29.400 29Z"/>
    <path fill="none" stroke="#8fdccf" stroke-width="1.400" d="M5 27.200Q8.200 31 8.100 36.400M25 27.200Q21.800 31 21.900 36.400"/>
  </symbol>
  <symbol id="ticks" viewBox="0 0 32 20">
    <path fill="none" stroke="currentColor" stroke-width="2.500" stroke-linecap="round" stroke-linejoin="round" d="M1.800 12.500L7.200 18.200 21.500 1.600M14.200 16.400L16 18.200 30.200 1.600"/>
  </symbol>
</svg>

<main class="chat">
  <div class="message out">
    <div class="bubble short">
      <span class="text">Iya pak <svg class="emoji"><use href="#pray"/></svg></span>
      <span class="meta">15.11<svg class="ticks"><use href="#ticks"/></svg></span>
    </div>
  </div>

  <div class="message out">
    <div class="actions">
      <button class="action" aria-label="Reaksi">
        <svg width="30" height="30" viewBox="0 0 30 30"><circle cx="15" cy="15" r="15" fill="#7e8284"/><g fill="#050607"><circle cx="10.400" cy="11.700" r="2.500"/><circle cx="19.400" cy="11.700" r="2.500"/><path d="M6.800 17.200Q15 19.200 23.200 17.200 20.500 22.800 15 22.800 9.500 22.800 6.800 17.200Z"/></g></svg>
      </button>
      <button class="action" aria-label="Teruskan">
        <svg width="34" height="26" viewBox="0 0 34 26"><path fill="#7e8284" d="M21 .4Q21-.4 21.800.4L33.500 11.600Q34 12.200 33.500 12.800L21.800 24.200Q21 24.600 21 24V17.600Q8 17 .6 25.400 0 25.600.1 24.800 3.800 9.600 21 7.400Z"/></svg>
      </button>
    </div>
    <div class="bubble media">
      <svg class="sheet" viewBox="1154 51 660 165" width="660" height="165">
        <path fill="#fff" d="M1154 51h660v165h-660z"/>
        <path class="faint" d="M1211.700 51V216M1260.300 51V216M1315.700 51V216M1354.300 51V216M1392.300 51V216M1436.300 51V216M1480.500 51V216M1524.500 51V216M1567.700 51V216M1611.700 51V216M1677.300 51V216M1739.300 51V216M1791.700 51V216M1154 202.700H1814M1154 211.500H1814"/>
        <path fill="#e6d1dc" d="M1154 60.300h660v35.400h-660z"/>
        <path fill="#fcf1d0" d="M1154 95.700h637.700v99.300H1154z"/><path fill="#fff" d="M1791.700 95.700H1814V195h-22.300z"/>
        <path class="rule" d="M1154 60.300H1814M1315.700 68.700H1567.700M1154 95.700H1814M1211.700 168.700H1814M1211.700 177.500H1814M1211.700 186.300H1814M1154 195H1814M1211.700 60.300V195M1260.300 60.300V195M1315.700 60.300V195M1354.300 68.700V195M1392.300 68.700V195M1436.300 68.700V195M1480.500 68.700V195M1524.500 68.700V195M1567.700 60.300V195M1611.700 60.300V195M1677.300 60.300V195M1739.300 60.300V195M1791.700 60.300V195"/>
        <g class="head">
          <text x="1236.300" y="73" textLength="18">NAMA</text><text x="1236.500" y="80.300" textLength="42" font-style="italic">STAKEHOLDE</text><text x="1236.500" y="87.500" font-style="italic">R</text>
          <text x="1442" y="67" textLength="78">LINGKUP KEGIATAN P4GN</text>
          <text x="1334.800" y="84.600" textLength="32">NASIONAL</text><text x="1373.500" y="84.600" textLength="29">PROVINSI</text>
          <text x="1414.700" y="81.200" textLength="19">KOTA/</text><text x="1414.700" y="88.500" textLength="37">KABUPATEN</text>
          <text x="1458.700" y="84.600" textLength="38">KECAMATAN</text>
          <text x="1502.500" y="81.200" textLength="40">KELURAHAN/</text><text x="1502.500" y="88.500" textLength="17">DESA</text>
          <text x="1546" y="81.200" textLength="37">LINGKUNGA</text><text x="1546" y="88.500">N</text>
          <text x="1590" y="69.300" textLength="25">JUMLAH</text><text x="1590" y="76.700" textLength="30">SASARAN</text><text class="plain" x="1590" y="84" textLength="31">(orang) jika</text><text class="plain" x="1590" y="91.300" textLength="11">ada</text>
        </g>
        <g class="head narrow">
          <text x="1170.500" y="80.500" textLength="33">ATUAN KERJA</text>
          <text x="1288" y="76.600" textLength="40">KEGIATAN YANG</text><text x="1288" y="84" textLength="30">DILAKUKAN</text>
          <text x="1645" y="80.300" textLength="42">HASIL/ DAMPAK</text><text x="1708.300" y="80.300" textLength="33">KESIMPULAN</text><text x="1765.300" y="80.300" textLength="40">TINDAK LANJUT</text><text class="start" x="1803.600" y="66.800">DOK</text>
        </g>
        <g class="note">
          <text x="1171.500" y="102.500" textLength="36">t/BNNP/BNNK</text>
          <text x="1236.300" y="102.300" textLength="36">Contoh Pemda</text><text x="1236.300" y="109.500" textLength="42">(Tingkat Provinsi,</text><text x="1236.300" y="116.800" textLength="24">Kab/Kota,</text><text x="1236.300" y="124" textLength="30">Kecamatan,</text><text x="1236.300" y="131.300" textLength="42">Kelurahan/Desa,</text><text x="1236.300" y="138.500" textLength="30">Lingkungan)</text>
          <text x="1288" y="102.300" textLength="41">Berupa Fasilitasi</text><text x="1288" y="109.500" textLength="36">Kegiatan P4GN</text><text x="1288" y="116.800" textLength="42">(Regulasi, Timdu,</text><text x="1288" y="124" textLength="34">Rencana aksi,</text><text x="1288" y="131.300" textLength="49">Tempat Rehabilitasi,</text><text x="1288" y="138.500" textLength="44">Fasilitasi Kegiatan</text><text x="1288" y="145.800" textLength="38">Pemberdayaan</text><text x="1288" y="153" textLength="51">Alternatif, Sosialisasi</text><text x="1288" y="160.300" textLength="45">P4GN, Deteksi Dini</text><text x="1288" y="167.300" textLength="31">Tes Urin, dll)</text>
          <text x="1236.300" y="192.700">dst</text><text x="1288" y="192.700">dst</text><text x="1335" y="192.700">dst</text><text x="1373.500" y="192.700">dst</text><text x="1414.500" y="192.700">dst</text>
          <text x="1590" y="102.300" textLength="24">contoh 30</text><text x="1590" y="175">20</text><text x="1590" y="184">40</text>
        </g>
        <g class="note dark start"><text x="1811.500" y="102.300">U</text><text x="1796" y="109.300">DATA KE</text><text x="1801" y="116.800">dan D</text></g>
      </svg>
      <div class="text caption">sore pak izin bertanya mengenai cara pengisian<br>untuk kegiatan dukungan stakeholder dalam<br>pelaksanaan p4gn. untuk kolom nama<br>stakeholder itu bnnp/bnnk ya pak ?, untuk kolom<br>nasional dan lingkungan di isinya seperti apa ya<br>pak ? <svg class="emoji"><use href="#pray"/></svg></div>
      <span class="meta">15.46<svg class="ticks"><use href="#ticks"/></svg></span>
    </div>
  </div>

  <div class="message in">
    <svg class="tail" width="14" height="22" viewBox="0 0 14 22"><path fill="#242b31" d="M14 0H2Q-.600.200.400 2.400L14 22Z"/></svg>
    <div class="bubble short">
      <span class="text">Disitu sdh jelas ada keterangan nya Pak</span>
      <span class="meta">16.06</span>
    </div>
  </div>
</main>
<script src="bubbles.js"></script>
</body>
</html>
```

FILE: styles.css
```css
* { box-sizing: border-box; }
body {
  margin: 0;
  width: 1894px;
  height: 580px;
  overflow: hidden;
  background: #0c1318;
  font-family: Inter, "Liberation Sans", sans-serif;
}
.wallpaper { position: absolute; inset: 0; }
.doodles {
  fill: none;
  stroke: #171c1f;
  stroke-width: 6;
  stroke-linecap: round;
  stroke-linejoin: round;
}
.dashed { stroke-dasharray: 22 14; }
.digits { stroke-width: 5; }
.dots { stroke-dasharray: 1 30; }
.sprites { position: absolute; width: 0; height: 0; }

.chat {
  position: relative;
  height: 580px;
  padding: 0 74px 14px 66px;
  display: flex;
  flex-direction: column;
  justify-content: flex-end;
}
.message { display: flex; flex-shrink: 0; }
.out { justify-content: flex-end; margin-bottom: 4px; }
.in { margin-top: 20px; }
.bubble { border-radius: 14px; color: #e9edef; }
.out .bubble { background: #265b4a; }
.in .bubble { background: #242b31; border-top-left-radius: 0; }
.tail { display: block; }

.short {
  display: flex;
  justify-content: space-between;
  height: 66px;
  padding: 12px 14px 0 18px;
}
.out .short { width: 275px; padding-top: 10px; }
.in .short { width: 621px; padding-right: 15px; }
.text {
  font-size: 27.800px;
  font-weight: 450;
  line-height: 38px;
  letter-spacing: -0.2px;
  white-space: nowrap;
}
.emoji {
  width: 29px;
  height: 38px;
  margin: 0 0 -9px 5px;
  vertical-align: baseline;
}
.meta {
  display: flex;
  align-items: center;
  gap: 7px;
  height: 30px;
  margin-top: 19px;
  font-size: 22px;
  font-weight: 450;
  letter-spacing: .4px;
  color: #9bb2aa;
}
.out .short .meta { margin-top: 20px; }
.in .meta { margin-top: 18px; color: #a1a4a7; }
.ticks { width: 32px; height: 20px; }

.media {
  display: flex;
  flex-direction: column;
  width: 672px;
  height: 431px;
  padding: 6px;
}
.sheet { display: block; border-radius: 14px; }
.caption { height: 228px; padding-left: 12px; margin-top: 14px; }
.media .meta { align-self: flex-end; margin: -18px 8px 0 0; }

.actions { display: flex; gap: 12px; margin: 190px 12px 0 0; height: 50px; }
.action {
  display: grid;
  place-items: center;
  width: 50px;
  height: 50px;
  padding: 0;
  border: 0;
  border-radius: 50%;
  background: rgba(0, 0, 0, .72);
}

.faint { fill: none; stroke: #e6e6e6; stroke-width: .8; }
.rule { fill: none; stroke: #4a4344; stroke-width: .9; }
.head { font: bold 6px "Liberation Sans", sans-serif; fill: #171215; text-anchor: middle; }
.narrow { font: bold 5.400px "Noto Sans", sans-serif; }
.plain { font-weight: 400; }
.note { font: italic 500 5.800px "Open Sans", "Noto Sans", sans-serif; fill: #2a20dc; text-anchor: middle; }
.dark { font-style: normal; font-weight: 400; fill: #222; }
.start { text-anchor: start; }
```

FILE: bubbles.js
```js
// Small rings scattered between the wallpaper doodles: [offsetX, offsetY, "x y r ..."] at 3x scale.
const fields = [
  [0, 0, "181 3 8 210 20 8 182 206 9 396 353 11 442 356 14 357 382 9 317 393 9 336 432 12 317 475 9 396 484 12 184 415 14 88 448 8 126 457 11 169 458 13 66 486 12 199 511 9 250 554 10 337 614 14 358 648 9 15 640 13 200 684 9 239 721 13 212 749 9 39 710 9 97 718 13 91 767 16 123 802 11 39 816 11 497 802 14 482 854 16 522 877 9 450 888 9 832 887 11 660 106 14 695 140 9 731 148 9 742 197 17 710 233 11 722 288 16 728 347 9 797 177 8 840 192 12 933 114 12 957 69 9 990 197 17 1049 184 9 1070 235 10 954 234 9 974 267 13 1015 266 5 1095 293 14 1053 324 9 1099 350 12 1130 125 17 1086 140 9 1184 112 8 701 413 8 794 422 16 844 421 9 901 426 14 828 453 7 789 484 10 1166 453 7 1194 493 10 1218 556 16 1246 590 9 842 638 10 808 662 11 836 681 8 1014 678 14 1037 638 9 1204 749 14 1169 806 8 1210 845 10"],
  [400, 0, "110 380 11 259 321 13 551 284 13 578 328 17 631 319 9 754 299 9 744 335 15 551 373 10 613 370 9 559 413 11 560 466 13 601 494 7 452 576 9 515 572 11 497 608 7 459 630 8 481 681 15 717 41 12 779 30 10 825 43 10 779 85 17 861 73 11 928 145 10 928 189 9 1060 32 16 1115 23 9 1193 214 10 1244 48 9 1010 348 11 1034 422 16 1077 398 11 1125 408 10 1183 378 12 1128 469 15 1143 542 11 1143 605 12 679 536 15 731 539 19 791 524 12 794 563 7 754 587 10 699 592 6 939 496 10 952 540 18 920 587 10 880 744 7 915 729 12 878 790 10 931 787 18 944 831 9 917 878 9 1109 880 17 567 842 9 249 812 10 180 839 10 212 865 9 265 862 14 205 541 9 229 559 11 57 546 9 48 590 10 60 718 9 10 845 11"],
  [0, 290, "37 63 9 112 64 15 450 18 10 454 60 10 551 150 14 523 8 10 766 91 12 813 70 17 795 142 8 831 17 12 963 41 13 1015 69 17 1004 106 8 981 144 10 1034 131 11 1244 174 16 719 255 8 751 277 9 747 311 11 1070 302 8 902 407 8 900 477 13 894 530 18 938 517 12 736 565 10 669 597 17 613 586 9 627 461 12 598 487 9 650 492 10 420 542 13 434 579 9 484 588 17 51 453 10 71 602 13 107 618 9 155 621 7 46 645 12 1131 402 9 1227 432 15 1179 451 12 1138 454 10 1123 488 9 62 837 18"],
  [400, 290, "45 174 16 57 231 10 172 240 11 167 283 9 109 287 11 129 331 17 87 423 9 28 432 15 315 136 10 334 180 12 371 224 19 369 306 9 343 361 15 240 385 9 435 72 9 474 74 11 477 387 13 489 448 8 486 496 10 529 493 11 530 540 9 722 552 10 193 554 15 163 517 6 328 578 9 368 578 11 241 601 8 305 617 15 770 257 11 820 243 16 913 180 10 921 216 12 957 208 12 991 199 9 1027 224 16 1083 203 17 1060 256 9 965 268 12 1150 261 14 1079 303 13 892 373 9 882 418 12 920 429 8 860 454 7 918 9 10 950 39 9 1109 12 16 1206 408 12 1083 459 13 965 470 10 1118 495 12 982 517 15 1072 517 10 1033 543 14 996 583 11 1038 649 12 1147 650 8 1217 751 18 1232 693 8 1173 787 10 1229 809 9 1118 846 12 974 854 17 1015 859 9 981 721 13 920 779 11 967 790 9"],
  [-25, 290, "391 668 22 451 656 15 498 649 11 543 653 15 580 631 9 405 722 9 450 731 14 506 764 10 538 808 8 628 817 8 514 846 16 29 809 8 75 817 9 134 837 18 1186 633 10 1149 661 10 1112 692 13 1194 695 18 1152 713 9 1102 798 8 1092 847 14"],
  [355, 460, "46 124 11 94 192 8 463 69 9 504 68 10 375 91 8 440 110 16 430 155 9 674 156 8 647 186 10 715 180 14 745 171 8 640 228 9 865 300 20 827 326 15 926 272 10 929 327 8 1015 318 8 1055 270 10 1103 281 9 785 94 16 785 94 26 410 360 12"]
];
const layer = document.getElementById("bubbles");
for (const [dx, dy, list] of fields) {
  const n = list.split(" ").map(Number);
  for (let i = 0; i < n.length; i += 3) {
    const ring = document.createElementNS("http://www.w3.org/2000/svg", "circle");
    ring.setAttribute("cx", dx + n[i] / 3);
    ring.setAttribute("cy", dy + n[i + 1] / 3);
    ring.setAttribute("r", n[i + 2] / 3);
    ring.setAttribute("stroke-width", 2);
    layer.appendChild(ring);
  }
}
```
